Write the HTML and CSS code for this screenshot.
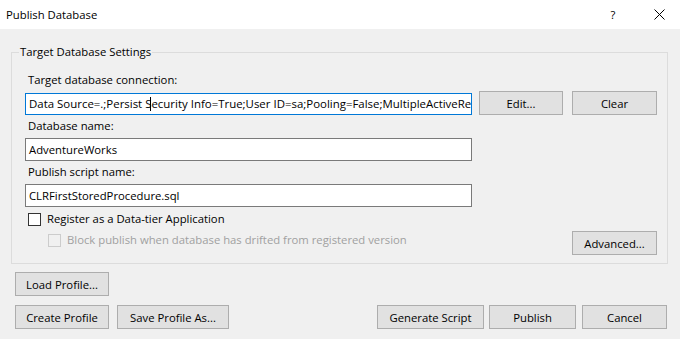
FILE: index.html
```html
<!doctype html>
<html lang="en">
    <head>
        <meta charset="UTF-8" />
        <title>Publish Database</title>
        <link rel="stylesheet" href="styles.css">
    </head>
    <body>
        <div class="titlebar">
            <span class="title">Publish Database</span>
            <span class="caption-btn help">?</span>
            <span class="caption-btn close">
                <svg width="11" height="11" viewBox="0 0 11 11">
                    <path d="M0.5 0.5L10.5 10.5M10.5 0.5L0.5 10.5" stroke="#000" stroke-width="1" fill="none" />
                </svg>
            </span>
        </div>
        <fieldset class="group">
            <legend>Target Database Settings</legend>
            <div class="group-body">
                <div class="label">Target database connection:</div>
                <div class="conn-row">
                    <div class="textbox conn focused"><span class="conn-text">Data Source=.;Persist S<span class="caret"></span>ecurity Info=True;User ID=sa;Pooling=False;MultipleActiveRe</span></div>
                    <button class="btn edit">Edit...</button>
                    <button class="btn clear">Clear</button>
                </div>
                <div class="label spaced">Database name:</div>
                <div class="textbox field">AdventureWorks</div>
                <div class="label spaced">Publish script name:</div>
                <div class="textbox field">CLRFirstStoredProcedure.sql</div>
                <div class="check-row">
                    <span class="checkbox"></span>
                    <span>Register as a Data-tier Application</span>
                </div>
                <div class="option-row">
                    <div class="check-row sub disabled">
                        <span class="checkbox"></span>
                        <span>Block publish when database has drifted from registered version</span>
                    </div>
                    <button class="btn advanced">Advanced...</button>
                </div>
            </div>
        </fieldset>
        <div class="actions">
            <div class="action-row">
                <button class="btn profile">Load Profile...</button>
            </div>
            <div class="action-row second">
                <button class="btn profile">Create Profile</button>
                <button class="btn save">Save Profile As...</button>
                <div class="spacer"></div>
                <button class="btn generate">Generate Script</button>
                <button class="btn publish">Publish</button>
                <button class="btn cancel">Cancel</button>
            </div>
        </div>
    </body>
</html>
```

FILE: styles.css
```css
body {
    margin: 0;
    background: #f0f0f0;
    font-family: "Open Sans", sans-serif;
    font-size: 11.3px;
    line-height: 16px;
    color: #000;
}
.titlebar {
    height: 29px;
    background: #fff;
    display: flex;
    align-items: center;
    padding-left: 6px;
}
.title {
    flex: 1;
}
.caption-btn {
    width: 46px;
    height: 29px;
    display: flex;
    align-items: center;
    justify-content: center;
}
.help {
    padding-left: 4px;
    box-sizing: border-box;
}
.close {
    padding-left: 5px;
    box-sizing: border-box;
}
.group {
    margin: 15px 12px 0 11px;
    padding: 0;
    border: 1px solid #dcdcdc;
    min-width: 0;
}
.group legend {
    margin-left: 7px;
    padding: 0 1px;
    line-height: 16px;
}
.group-body {
    padding: 12px 10px 8px 13px;
}
.label {
    padding-left: 3px;
    height: 16px;
}
.label.spaced {
    margin-top: 3px;
}
.textbox {
    box-sizing: border-box;
    width: 447px;
    background: #fff;
    border: 1px solid #7a7a7a;
    padding-left: 3px;
    white-space: nowrap;
    overflow: hidden;
    display: flex;
    align-items: center;
}
.textbox.focused {
    border-color: #0078d7;
}
.textbox.conn {
    height: 22px;
}
.conn-text {
    font-size: 11.45px;
}
.textbox.field {
    height: 23px;
    margin-top: 4px;
}
.caret {
    display: inline-block;
    width: 1px;
    height: 14px;
    background: #000;
    margin-left: -1px;
    vertical-align: -3px;
}
.conn-row {
    display: flex;
    align-items: flex-end;
    margin-top: 3px;
}
.btn {
    box-sizing: border-box;
    height: 24px;
    padding: 0;
    background: #e1e1e1;
    border: 1px solid #adadad;
    font-family: inherit;
    font-size: inherit;
    color: #000;
}
.edit {
    margin-left: 7px;
    width: 84px;
}
.clear {
    margin-left: 9px;
    width: 85px;
}
.check-row {
    display: flex;
    align-items: center;
    height: 16px;
    margin-top: 4px;
    padding-left: 3px;
}
.checkbox {
    box-sizing: border-box;
    width: 13px;
    height: 13px;
    border: 1px solid #333;
    background: #fff;
    margin-right: 6px;
}
.option-row {
    display: flex;
    align-items: flex-start;
    margin-top: 4px;
}
.check-row.sub {
    margin-top: 1px;
    padding-left: 23px;
}
.disabled {
    color: #a0a0a0;
}
.disabled .checkbox {
    border-color: #cccccc;
    background: transparent;
}
.advanced {
    margin-left: auto;
    width: 85px;
}
.actions {
    padding: 8px 13px 0 15px;
}
.action-row {
    display: flex;
}
.action-row.second {
    margin-top: 9px;
}
.profile {
    width: 94px;
}
.save {
    margin-left: 8px;
    width: 112px;
}
.spacer {
    flex: 1;
}
.generate {
    width: 107px;
}
.publish {
    margin-left: 5px;
    width: 87px;
}
.cancel {
    margin-left: 6px;
    width: 85px;
}
```
